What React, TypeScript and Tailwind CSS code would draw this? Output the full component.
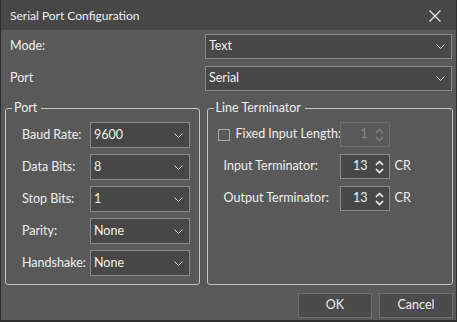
import React from "react";

const font = { fontFamily: 'Lato, "Open Sans", sans-serif' };

function Chevron() {
  return (
    <svg width="9" height="5" viewBox="0 0 9 5" className="shrink-0">
      <path d="M0.5 0.5 L4.5 4.5 L8.5 0.5" fill="none" stroke="#e6e6e6" strokeWidth="1" />
    </svg>
  );
}

function Combo({ value, className }: { value: string; className: string }) {
  return (
    <div
      className={
        "flex shrink-0 items-center justify-between border border-[#8a8a8a] bg-[#474747] pl-[3px] pr-[6px] text-[12.5px] text-[#f2f2f2] " +
        className
      }
    >
      <span>{value}</span>
      <Chevron />
    </div>
  );
}

function Spin({ value, disabled }: { value: string; disabled?: boolean }) {
  const c = disabled ? "#7c7c7c" : "#f5f5f5";
  return (
    <div
      className={
        "flex h-[25px] w-[50px] shrink-0 items-center justify-end border pr-[5px] text-[12.5px] " +
        (disabled ? "border-[#6e6e6e] bg-[#595959] text-[#8a8a8a]" : "border-[#8a8a8a] bg-[#474747] text-[#f2f2f2]")
      }
    >
      <span className="mr-[7px]">{value}</span>
      <svg width="9" height="16" viewBox="0 0 9 16">
        <path d="M1 6 L4.5 2.5 L8 6" fill="none" stroke={c} strokeWidth="1.6" />
        <path d="M1 10 L4.5 13.5 L8 10" fill="none" stroke={c} strokeWidth="1.6" />
      </svg>
    </div>
  );
}

function Row({ label, value }: { label: string; value: string }) {
  return (
    <div className="flex h-[26px] items-center">
      <span className="w-[68px] shrink-0 whitespace-nowrap text-[12.5px] text-[#f0f0f0]">{label}</span>
      <Combo value={value} className="h-[26px] w-[100px]" />
    </div>
  );
}

export default function App() {
  return (
    <div className="h-[322px] w-[457px] bg-[#2e2e2e] pb-[2px] pl-[1px] pr-[1px]" style={font}>
      <div className="flex h-full flex-col bg-[#595959] text-[#f0f0f0]">
        <div className="flex h-[30px] shrink-0 items-center justify-between bg-[#474747] pl-[9px] pr-[15px] pt-[2px]">
          <span className="whitespace-nowrap text-[12px] text-[#f0f0f0]">Serial Port Configuration</span>
          <svg width="12" height="12" viewBox="0 0 12 12">
            <path d="M0.5 0.5 L11.5 11.5 M11.5 0.5 L0.5 11.5" stroke="#ececec" strokeWidth="1.2" />
          </svg>
        </div>
        <div className="flex flex-col pl-[4px] pr-[3px] pt-[4px]">
          <div className="flex h-[25px] items-center">
            <span className="w-[200px] pl-[5px] text-[12.5px]">Mode:</span>
            <Combo value="Text" className="h-[25px] w-[247px]" />
          </div>
          <div className="mt-[7px] flex h-[25px] items-center">
            <span className="w-[200px] pl-[5px] text-[12.5px]">Port</span>
            <Combo value="Serial" className="h-[25px] w-[247px]" />
          </div>
          <div className="mt-[9px] flex gap-[7px]">
            <fieldset className="h-[185px] w-[195px] rounded-[3px] border border-[#c4c4c4] pt-[6px]">
              <legend className="ml-[6px] px-[2px] pr-[4px] text-[12.5px] leading-[16px]">Port</legend>
              <div className="flex flex-col gap-[6px] pl-[16px]">
                <Row label="Baud Rate:" value="9600" />
                <Row label="Data Bits:" value="8" />
                <Row label="Stop Bits:" value="1" />
                <Row label="Parity:" value="None" />
                <Row label="Handshake:" value="None" />
              </div>
            </fieldset>
            <fieldset className="h-[185px] w-[247px] rounded-[3px] border border-[#c4c4c4] pt-[6px]">
              <legend className="ml-[6px] px-[2px] pr-[4px] text-[12.5px] leading-[16px]">Line Terminator</legend>
              <div className="flex flex-col gap-[7px] pl-[10px]">
                <div className="flex h-[25px] items-center">
                  <div className="h-[12px] w-[12px] shrink-0 border border-[#a8a8a8] bg-[#595959]" />
                  <span className="ml-[6px] w-[104px] shrink-0 whitespace-nowrap text-[12.5px]">Fixed Input Length:</span>
                  <Spin value="1" disabled />
                </div>
                <div className="flex h-[25px] items-center">
                  <span className="w-[122px] shrink-0 whitespace-nowrap pl-[6px] text-[12.5px]">Input Terminator:</span>
                  <Spin value="13" />
                  <span className="ml-[5px] text-[12.5px]">CR</span>
                </div>
                <div className="flex h-[25px] items-center">
                  <span className="w-[122px] shrink-0 whitespace-nowrap pl-[6px] text-[12.5px]">Output Terminator:</span>
                  <Spin value="13" />
                  <span className="ml-[5px] text-[12.5px]">CR</span>
                </div>
              </div>
            </fieldset>
          </div>
          <div className="mt-[8px] flex justify-end gap-[7px]">
            <button className="h-[25px] w-[74px] border border-[#6e6e6e] bg-[#4b4b4b] text-[12.5px] text-[#f0f0f0]">OK</button>
            <button className="h-[25px] w-[74px] border border-[#6e6e6e] bg-[#4b4b4b] text-[12.5px] text-[#f0f0f0]">Cancel</button>
          </div>
        </div>
      </div>
    </div>
  );
}
